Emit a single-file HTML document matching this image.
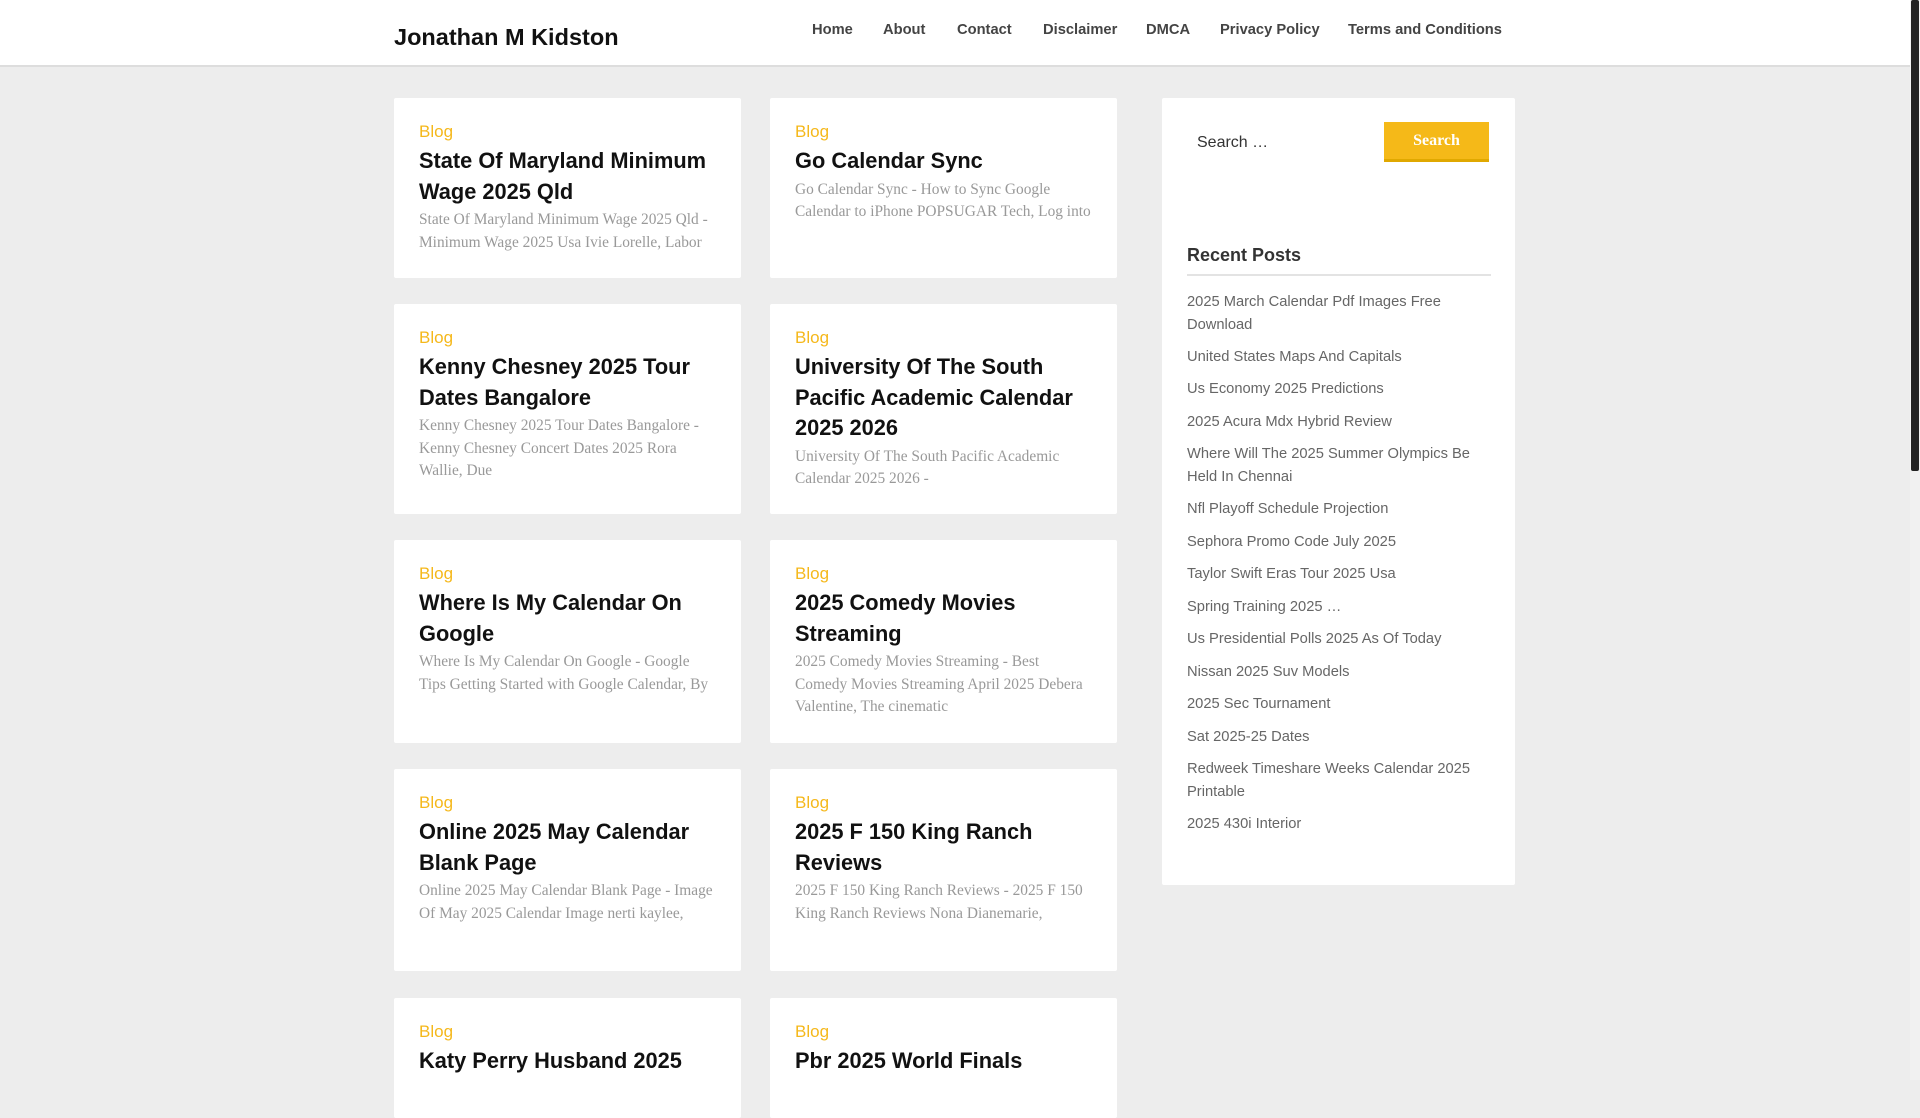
<!DOCTYPE html>
<html><head><meta charset="utf-8"><style>
*{margin:0;padding:0;box-sizing:border-box}
body{width:1920px;height:1080px;overflow:hidden;background:#ededed;font-family:"Liberation Sans",sans-serif;position:relative}
.hdr{position:absolute;left:0;top:0;width:1910px;height:67px;background:#fff;border-bottom:2px solid #ddd}
.logo{position:absolute;left:394px;top:24px;font-size:23.5px;font-weight:bold;color:#111}
.nav{position:absolute;top:22px;font-size:14.7px;font-weight:bold;color:#444}
.card{position:absolute;background:#fff;border-radius:2px;padding:24px 25px 0 25px;width:347px}
.c2{left:770px}.c1{left:394px}
.cat{font-size:17px;line-height:20px;color:#f5b81b}
.t{font-size:21.8px;font-weight:bold;line-height:30.5px;color:#111;margin-top:4px}
.e{font-family:"Liberation Serif",serif;font-size:15.4px;line-height:22.6px;color:#999;margin-top:2px}
.side{position:absolute;left:1162px;top:98px;width:353px;height:787px;background:#fff;border-radius:2px}
.sb{position:absolute;left:1384px;top:122px;width:105px;height:40px;background:#f5b918;border-bottom:3px solid #e0a800;color:#fff;font-family:"Liberation Serif",serif;font-weight:bold;font-size:16px;text-align:center;line-height:38px}
.rp{position:absolute;left:1187px;width:304px;font-size:14.7px;line-height:22.6px;color:#666}
.scroll{position:absolute;right:0;top:0;width:10px;height:1080px;background:#f1f1f1}
.thumb{position:absolute;right:1px;top:0;width:8px;height:471px;background:#222;border-radius:2px}
</style></head><body>
<div class="hdr"></div>
<div class="logo">Jonathan M Kidston</div>
<div class="nav" style="left:812px">Home</div>
<div class="nav" style="left:883px">About</div>
<div class="nav" style="left:957px">Contact</div>
<div class="nav" style="left:1043px">Disclaimer</div>
<div class="nav" style="left:1146px">DMCA</div>
<div class="nav" style="left:1220px">Privacy Policy</div>
<div class="nav" style="left:1348px">Terms and Conditions</div>

<div class="card c1" style="top:98px;height:180px"><div class="cat">Blog</div><div class="t">State Of Maryland Minimum Wage 2025 Qld</div><div class="e">State Of Maryland Minimum Wage 2025 Qld - Minimum Wage 2025 Usa Ivie Lorelle, Labor</div></div>
<div class="card c2" style="top:98px;height:180px"><div class="cat">Blog</div><div class="t">Go Calendar Sync</div><div class="e">Go Calendar Sync - How to Sync Google Calendar to iPhone POPSUGAR Tech, Log into</div></div>

<div class="card c1" style="top:304px;height:210px"><div class="cat">Blog</div><div class="t">Kenny Chesney 2025 Tour Dates Bangalore</div><div class="e">Kenny Chesney 2025 Tour Dates Bangalore - Kenny Chesney Concert Dates 2025 Rora Wallie, Due</div></div>
<div class="card c2" style="top:304px;height:210px"><div class="cat">Blog</div><div class="t">University Of The South Pacific Academic Calendar 2025 2026</div><div class="e">University Of The South Pacific Academic Calendar 2025 2026 -</div></div>

<div class="card c1" style="top:540px;height:203px"><div class="cat">Blog</div><div class="t">Where Is My Calendar On Google</div><div class="e">Where Is My Calendar On Google - Google Tips Getting Started with Google Calendar, By</div></div>
<div class="card c2" style="top:540px;height:203px"><div class="cat">Blog</div><div class="t">2025 Comedy Movies Streaming</div><div class="e">2025 Comedy Movies Streaming - Best Comedy Movies Streaming April 2025 Debera Valentine, The cinematic</div></div>

<div class="card c1" style="top:769px;height:202px"><div class="cat">Blog</div><div class="t">Online 2025 May Calendar Blank Page</div><div class="e">Online 2025 May Calendar Blank Page - Image Of May 2025 Calendar Image nerti kaylee,</div></div>
<div class="card c2" style="top:769px;height:202px"><div class="cat">Blog</div><div class="t">2025 F 150 King Ranch Reviews</div><div class="e">2025 F 150 King Ranch Reviews - 2025 F 150 King Ranch Reviews Nona Dianemarie,</div></div>

<div class="card c1" style="top:998px;height:120px"><div class="cat">Blog</div><div class="t">Katy Perry Husband 2025</div></div>
<div class="card c2" style="top:998px;height:120px"><div class="cat">Blog</div><div class="t">Pbr 2025 World Finals</div></div>

<div class="side"></div>
<div style="position:absolute;left:1197px;top:134px;font-size:16px;color:#333">Search …</div>
<div class="sb">Search</div>
<div style="position:absolute;left:1187px;top:245px;font-size:18px;font-weight:bold;color:#333">Recent Posts</div>
<div style="position:absolute;left:1187px;top:274px;width:304px;height:2px;background:#e3e3e3"></div>
<div class="rp" style="top:291px">2025 March Calendar Pdf Images Free Download</div>
<div class="rp" style="top:346px">United States Maps And Capitals</div>
<div class="rp" style="top:378px">Us Economy 2025 Predictions</div>
<div class="rp" style="top:411px">2025 Acura Mdx Hybrid Review</div>
<div class="rp" style="top:443px">Where Will The 2025 Summer Olympics Be Held In Chennai</div>
<div class="rp" style="top:498px">Nfl Playoff Schedule Projection</div>
<div class="rp" style="top:531px">Sephora Promo Code July 2025</div>
<div class="rp" style="top:563px">Taylor Swift Eras Tour 2025 Usa</div>
<div class="rp" style="top:596px">Spring Training 2025 …</div>
<div class="rp" style="top:628px">Us Presidential Polls 2025 As Of Today</div>
<div class="rp" style="top:661px">Nissan 2025 Suv Models</div>
<div class="rp" style="top:693px">2025 Sec Tournament</div>
<div class="rp" style="top:726px">Sat 2025-25 Dates</div>
<div class="rp" style="top:758px">Redweek Timeshare Weeks Calendar 2025 Printable</div>
<div class="rp" style="top:813px">2025 430i Interior</div>
<div class="scroll"><div class="thumb"></div></div>
</body></html>
